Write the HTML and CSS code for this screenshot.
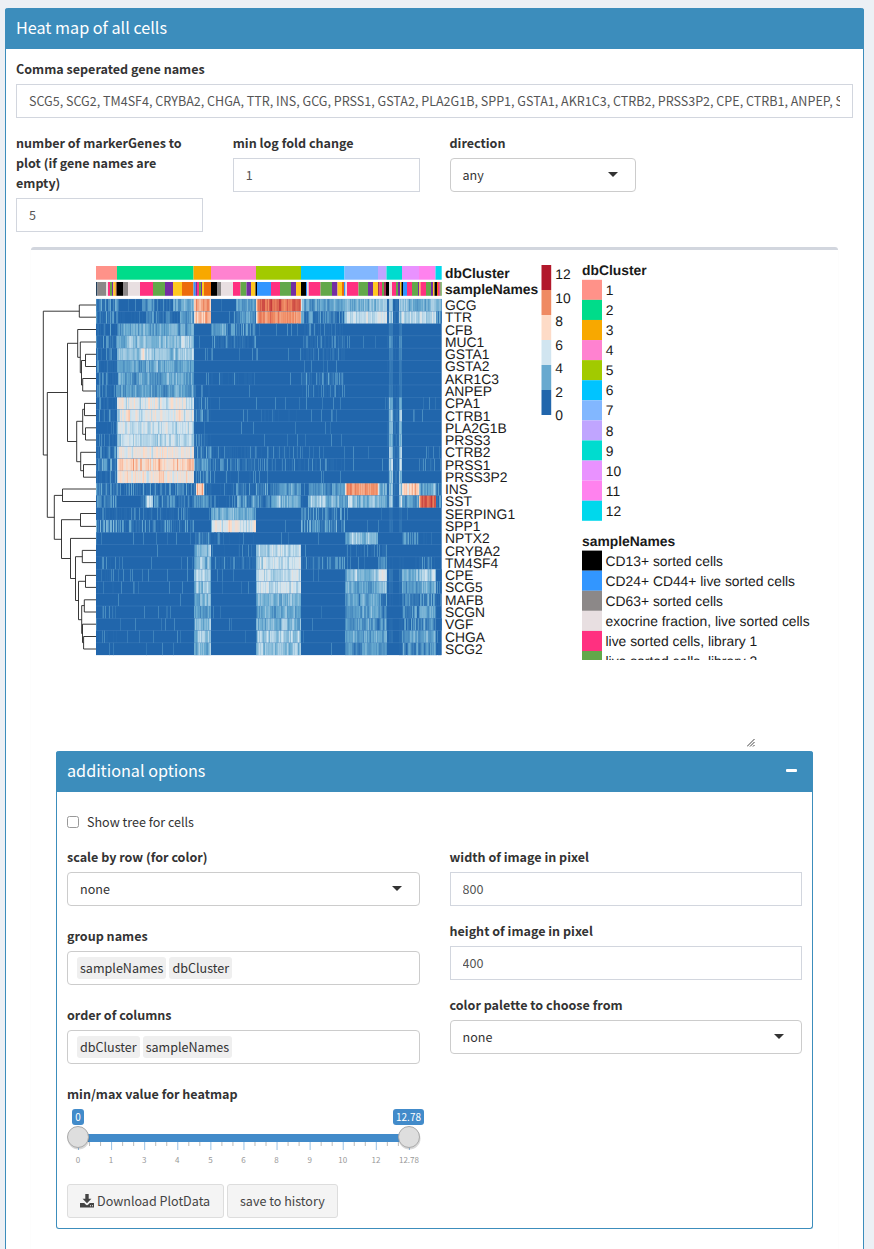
FILE: index.html
```html
<!DOCTYPE html>
<html lang="en">
<head>
<meta charset="utf-8">
<title>Heat map of all cells</title>
<link rel="stylesheet" href="styles.css">
</head>
<body>
<main class="box">
  <header class="box-header">Heat map of all cells</header>
  <div class="box-body">
    <div class="field">
      <label class="label">Comma seperated gene names</label>
      <input class="control" value="SCG5, SCG2, TM4SF4, CRYBA2, CHGA, TTR, INS, GCG, PRSS1, GSTA2, PLA2G1B, SPP1, GSTA1, AKR1C3, CTRB2, PRSS3P2, CPE, CTRB1, ANPEP, SERPING1">
    </div>
    <div class="row four">
      <div class="field"><label class="label">number of markerGenes to plot (if gene names are empty)</label><input class="control" value="5"></div>
      <div class="field"><label class="label">min log fold change</label><input class="control" value="1"></div>
      <div class="field"><label class="label">direction</label><div class="select"><span>any</span><i class="caret"></i></div></div>
    </div>
    <section class="plot-box">
      <div class="plot-area">
        <svg class="plot" id="plot" viewBox="31 250 807 410" width="807" height="410"></svg>
        <svg class="grip" width="8" height="8" viewBox="0 0 8 8"><path d="M0 7.5L7.5 0M3 7.5L7.5 3M6 7.5L7.5 6" /></svg>
      </div>
      <div class="options">
        <header class="box-header options-header"><span>additional options</span><i class="minus"></i></header>
        <div class="box-body">
          <label class="check"><i class="check-box"></i>Show tree for cells</label>
          <div class="row two">
            <div>
              <div class="field wide"><label class="label">scale by row (for color)</label><div class="select"><span>none</span><i class="caret"></i></div></div>
              <div class="field wide"><label class="label">group names</label><div class="select tags"><span class="tag">sampleNames</span><span class="tag">dbCluster</span></div></div>
              <div class="field wide"><label class="label">order of columns</label><div class="select tags"><span class="tag">dbCluster</span><span class="tag">sampleNames</span></div></div>
              <label class="label flush">min/max value for heatmap</label>
              <svg class="slider" id="slider" viewBox="67 1104 360 65" width="360" height="65"></svg>
            </div>
            <div>
              <div class="field"><label class="label">width of image in pixel</label><input class="control" value="800"></div>
              <div class="field"><label class="label">height of image in pixel</label><input class="control" value="400"></div>
              <div class="field"><label class="label">color palette to choose from</label><div class="select"><span>none</span><i class="caret"></i></div></div>
            </div>
          </div>
          <div class="buttons">
            <button class="btn"><svg class="icon" width="14" height="14" viewBox="0 0 14 14"><path d="M5.3 0h3.4v4.7h2.7L7 9.2 2.6 4.7h2.7z"/><path d="M0 9h4.2l1.5 1.5a1.8 1.8 0 0 0 2.6 0L9.8 9H14v4.6H0zM10 11.3v1h1v-1zm2 0v1h1v-1z" fill-rule="evenodd"/></svg>Download PlotData</button>
            <button class="btn">save to history</button>
          </div>
        </div>
      </div>
    </section>
  </div>
</main>
<script src="plot.js"></script>
</body>
</html>
```

FILE: styles.css
```css
* { box-sizing: border-box; }
body { margin: 0; height: 1249px; overflow: hidden; padding: 8px 10px 0 5px; background: #ecf0f5; color: #333; font: 12.56px/20px "Noto Sans CJK SC", "Open Sans", sans-serif; }
.box { height: 1300px; background: #fff; border: 1px solid #3c8dbc; border-top: 0; border-radius: 3px; }
.box-header { height: 41px; padding: 9px 10px 11px 11px; margin: 0 -1px; border-radius: 3px 3px 0 0; background: #3c8dbc; color: #fff; font-size: 16.18px; line-height: 20px; }
.box-body { padding: 10px; }
.field { margin-bottom: 15px; }
.field.wide { margin-bottom: 20px; }
.label { display: block; margin-bottom: 5px; font-weight: 700; }
.label.flush { margin: 0; }
.control { display: block; width: 100%; height: 34px; padding: 5px 12px 7px; border: 1px solid #d2d6de; border-radius: 0; background: #fff; color: #555; font: inherit; outline: 0; }
.row { display: grid; column-gap: 30px; }
.four { grid-template-columns: repeat(4, minmax(0, 1fr)); }
.two { grid-template-columns: repeat(2, minmax(0, 1fr)); }
.select { display: flex; align-items: center; justify-content: space-between; height: 34px; padding: 0 17px 0 12px; border: 1px solid #ccc; border-radius: 4px; }
.caret { width: 0; height: 0; margin-top: -2px; border: 5px solid transparent; border-top-color: #333; border-bottom: 0; }
.tags { justify-content: flex-start; gap: 3px; padding-left: 9px; }
.tag { padding: 1px 3px; border-radius: 3px; background: #efefef; }
.plot-box { margin: 0 15px; height: 1040px; border-top: 3px solid #d2d6de; border-radius: 3px; box-shadow: 0 1px 1px rgba(0, 0, 0, .1); }
.plot-area { position: relative; height: 501px; }
.plot { display: block; font-family: "Liberation Sans", Arial, sans-serif; font-size: 13.86px; fill: #1a1a1a; text-rendering: geometricPrecision; }
.bold { font-weight: 700; }
.grip { position: absolute; left: 716px; top: 489px; stroke: #444; fill: none; stroke-width: 1; }
.options { margin: 0 25px; height: 478px; border: 1px solid #3c8dbc; border-top: 0; border-radius: 3px; }
.options-header { display: flex; justify-content: space-between; }
.minus { width: 11px; height: 3px; margin: 9px 6px 0 0; border-radius: 1px; background: #fff; }
.check { display: flex; align-items: center; gap: 8px; margin: 10px 0 15px; }
.check-box { width: 12px; height: 12px; border: 1px solid #999; border-radius: 2.5px; }
.slider { display: block; overflow: visible; font-size: 8.06px; }
.slider .grid-text { fill: #999; }
.slider .badge { fill: #fff; font-size: 10px; }
.buttons { display: flex; gap: 3px; margin-top: 15px; }
.btn { display: flex; align-items: center; justify-content: flex-start; gap: 3px; width: 111px; height: 34px; padding: 0 0 0 12px; border: 1px solid #ddd; border-radius: 3px; background: #f4f4f4; color: #444; font: inherit; white-space: nowrap; }
.btn:first-child { width: 157px; }
.icon { fill: #444; }
```

FILE: plot.js
```js
const genes = "GCG TTR CFB MUC1 GSTA1 GSTA2 AKR1C3 ANPEP CPA1 CTRB1 PLA2G1B PRSS3 CTRB2 PRSS1 PRSS3P2 INS SST SERPING1 SPP1 NPTX2 CRYBA2 TM4SF4 CPE SCG5 MAFB SCGN VGF CHGA SCG2".split(" ");
const edges = [96, 117, 193.5, 211, 256, 301, 344.5, 378, 386.5, 402, 419, 435.5, 441.7];
const clusterColors = ["#ff9289", "#00dc8a", "#f8a800", "#ff82d0", "#a2ca00", "#00c4ff", "#82b7ff", "#c0a5ff", "#00dccf", "#e992ff", "#ff82ee", "#00d8ec"];

// Mean level per gene and cluster, on the six-step colour scale below.
const levels = [
  [.5,.5,3.6,.4,4.3,.9,1.1,1.5,1.1,1.1,1.2,.8],
  [.4,.4,3.4,.3,3.9,.5,1.9,1.9,1,1.5,1.7,.6],
  [.3,.9,0,.6,.04,.15,0,0,.2,0,0,0],
  [.3,1.3,.06,.3,0,.25,.04,0,.5,0,0,0],
  [.2,1.5,.05,.05,.06,.2,0,0,.3,0,0,0],
  [.15,.95,0,0,0,.04,0,0,.2,0,0,0],
  [.2,.95,.06,.1,.04,.35,.04,0,.2,0,.03,0],
  [.2,.8,.1,.04,.04,.15,0,0,.2,.04,0,0],
  [.25,2.35,.25,.05,.03,.04,0,.05,.9,0,.08,0],
  [.2,2.3,.4,.05,.1,.05,.04,.03,1.1,.05,.05,0],
  [.1,1.95,.08,.05,.03,.04,0,0,.8,0,0,0],
  [.2,1.8,.2,.06,.05,.04,.03,0,.9,0,0,0],
  [.4,2.5,.5,.15,.1,.08,.04,.04,1.1,.05,.06,.05],
  [.5,3.1,.7,.3,.15,.15,.05,.1,1.2,.05,.2,.05],
  [.3,2.7,.4,.1,.04,.05,0,0,1,.03,0,0],
  [.4,.35,1,.3,.8,.75,3.8,.9,1,3.3,.9,.3],
  [.4,.45,.7,.6,.9,1,1.1,.9,1.2,.8,4.6,.5],
  [.15,.15,.03,1.1,.02,.4,.03,.04,.1,.02,0,.04],
  [.6,.35,.02,2.25,.02,.6,.04,.03,.15,.05,.02,0],
  [.05,.05,.4,.1,.03,.02,1.4,.02,0,.5,.1,0],
  [.04,.04,1.4,.1,1.8,.02,.12,.3,0,.03,0,0],
  [.1,.08,1.3,.2,1.9,.3,.05,.9,.03,.1,.25,0],
  [.1,.05,1.8,.05,1.9,.04,1.4,1.9,.2,1,1.7,.1],
  [.1,.08,1.6,.03,1.85,.02,.9,1.3,.1,.8,1,.2],
  [.05,.03,1.1,.02,1.2,.02,.75,.5,.03,.5,.6,.2],
  [.1,.05,1,.01,.9,.01,.9,.8,.02,.5,.8,.1],
  [.05,.03,1.2,.01,1.2,.02,.75,.6,.05,.4,.7,.1],
  [.1,.03,1.6,.02,1.5,.02,.9,.8,.1,.75,.9,.1],
  [.05,.05,1.1,.01,1.3,.01,.75,.8,.03,.5,.7,.1]
];
// Gene row, start x, end x, level: stretches that differ from their cluster.
const patches = [
  [0,119,142,.08],[0,142,152,.7],[0,152,173,.4],[0,173,193.5,1.1],[1,119,146,.1],[1,146,152,.8],[1,180,193.5,.9],
  [0,211,236,.06],[0,236,256,.9],[1,211,233,.04],[1,236,256,.7],[3,181,187,2],[4,140,147,2.3],
  [15,193.5,196,.4],[15,196,204,3.3],[15,204,211,.3],[15,256,271,.5],[15,301,308,.1],[16,146,153,1.6],[16,117,140,.04],
  [16,256,271,.4],[16,271,285,1.3],[16,309,325,1.6],[16,348,352,2],[16,301,308,.15],[17,342,344,.03],[15,211,234,.1],[16,211,234,.1],
  [2,211,226,.8],[2,226,236,.4]
];
const scale = [[33,102,172],[103,169,207],[209,229,240],[253,219,199],[239,138,98],[178,24,43]];
let seed = 71;
const rnd = () => (seed = (seed * 16807) % 2147483647) / 2147483647;
const color = v => {
  v = Math.max(0, Math.min(4.95, v));
  const i = Math.floor(v), t = v - i;
  return "rgb(" + scale[i].map((c, k) => Math.round(c + (scale[i + 1][k] - c) * t)) + ")";
};
const rect = (x, y, w, h, f) => `<rect x="${x}" y="${y}" width="${w}" height="${h}" fill="${f}"/>`;
const text = (x, y, s, extra = "") => `<text x="${x}" y="${y}" ${extra}>${s}</text>`;

let out = "";
clusterColors.forEach((c, i) => out += rect(edges[i], 266, edges[i + 1] - edges[i], 13.7, c));

const sample = { k: "#000", b: "#3296ff", g: "#8c8888", w: "#e8dfe1", p: "#ff3080", n: "#62a84a", v: "#742da4", y: "#ffc820", o: "#ec6b0c", d: "#24405a", r: "#a83058" };
const strips = "96d 97.5g 106w 108p 110n 112v 113.3y 115.5o 116.5k 123g 128w 140p 153n 165v 173y 182o 193.5b 195.5v 197p 199n 201v 202y 204o 211k 217g 221w 233p 240.5n 246.5v 251y 255.5k 257b 271p 280n 291v 296y 301k 306b 307w 308.7p 320.5n 332v 337.5y 342o 344b 345.5w 347p 358.5n 368v 373y 378r 379.7p 382n 384r 386k 389w 392p 396n 398v 400y 401.5k 403b 407p 412n 418v 419.3y 420.5p 426n 431v 433y 434.5k 437o 438p 439.5r 440.5n 441.7".split(" ");
strips.slice(0, -1).forEach((s, i) => {
  const x = parseFloat(s);
  out += rect(x, 282, parseFloat(strips[i + 1]) - x, 13.8, sample[s.slice(-1)]);
});

const top0 = 299, rowH = 12.28;
out += rect(96, top0, 345.7, rowH * 29, "#2166ac");
genes.forEach((g, r) => {
  const y = top0 + r * rowH;
  let c = 0, previous = 0;
  for (let x = 96; x < 441.5; x += 1) {
    while (x >= edges[c + 1]) c++;
    let m = levels[r][c];
    patches.forEach(p => { if (p[0] === r && x >= p[1] && x < p[2]) m = p[3]; });
    let v;
    if (c === 8) {
      const peak = (x >= 389 && x < 393) || (x >= 399 && x < 402);
      v = peak ? m * (1 + rnd() * .8) : m * .25 * rnd();
    } else if (m < .65) {
      v = rnd() < m * 1.1 ? .2 + rnd() * (.35 + m * 1.3) : rnd() * m * .5;
      previous = m;
    } else {
      const spread = m > 3.6 ? .45 : m > 2.1 ? .8 : .6;
      v = m + (rnd() + rnd() - 1) * spread + (previous - m) * .35;
      previous = v;
    }
    if (v > .04) out += rect(x, y, Math.min(1, 441.7 - x), rowH, color(v));
  }
  out += rect(96, y - .25, 345.7, .5, "rgba(110,160,210,.4)");
  out += text(445, y + 11, g);
});

// Row tree: [node x, top y, top child x, bottom y, bottom child x].
const tree = [
  [43.3,311.2,79.3,455,47.3],[79.3,305,96,317.2,96],[47.3,392.5,67.5,517.3,54.3],
  [67.5,343.3,77.7,441.5,76.7],[77.7,329.5,96,357.3,80.3],[80.3,342,96,372.7,81.5],
  [81.5,360.5,85.5,385,82.7],[85.5,354.3,96,366.5,96],[82.7,378.5,96,391,96],
  [76.7,421.3,82.7,461.7,80.7],[82.7,409.3,84.5,434.3,85.5],[84.5,403.4,96,415.6,96],[85.5,427.8,96,440,96],
  [80.7,452.3,96,470.7,83.5],[83.5,464.6,96,477.2,96],[54.3,495.4,62.5,539.3,61.5],[62.5,489,96,501.5,96],
  [61.5,519.7,80.5,558.5,70.5],[80.5,513.5,96,526.4,96],[70.5,538.4,96,578.5,75.5],
  [75.5,556.7,82.3,600.5,78.5],[82.3,550.4,96,562.6,96],[78.5,581.3,85.5,619.7,81.7],[85.5,575.4,96,587.4,96],
  [81.7,605.6,84.3,633.5,82.5],[84.3,599.8,96,612,96],[82.5,624.2,96,642.6,83.6],[83.6,636.5,96,649,96]
];
out += `<path fill="none" stroke="#222" stroke-width=".9" d="${tree.map(n => `M${n[2]} ${n[1]}H${n[0]}V${n[3]}H${n[4]}`).join("")}"/>`;

out += text(445, 278, "dbCluster", 'class="bold"') + text(445, 294, "sampleNames", 'class="bold"');
["#b2182b", "#ef8a62", "#fddbc7", "#d1e5f0", "#67a9cf", "#2166ac"].forEach((c, i) => out += rect(541.5, 265 + i * 25, 9.7, 25, c));
[12, 10, 8, 6, 4, 2, 0].forEach((n, i) => out += text(555.3, 279.3 + i * 23.5, n));
out += text(582, 275, "dbCluster", 'class="bold"') + text(582, 546, "sampleNames", 'class="bold"');
clusterColors.forEach((c, i) => out += rect(582, 279.8 + i * 20.08, 20, 20.1, c) + text(605.8, 295 + i * 20.08, i + 1));
[["CD13+ sorted cells", "k"], ["CD24+ CD44+ live sorted cells", "b"], ["CD63+ sorted cells", "g"], ["exocrine fraction, live sorted cells", "w"], ["live sorted cells, library 1", "p"], ["live sorted cells, library 2", "n"]].forEach((s, i) =>
  out += rect(582, 550.6 + i * 20.08, 20, 20.1, sample[s[1]]) + text(605.5, 565.8 + i * 20.08, s[0]));
document.getElementById("plot").innerHTML = out;

let s = rect(78, 1134, 331, 8, "#428bca");
for (let i = 0; i <= 30; i++) {
  const x = 78 + i * 11.03;
  s += rect(x, 1142, 1, i % 3 ? 4 : 8, i % 3 ? "#bbb" : "#99c1e5");
}
["0", "1", "3", "4", "5", "6", "8", "9", "10", "12", "12.78"].forEach((n, i) => s += text(78 + i * 33.1, 1163, n, 'class="grid-text" text-anchor="middle"'));
[78, 409].forEach(x => s += `<circle cx="${x + .5}" cy="1138.5" r="11" fill="rgba(0,0,0,.15)"/><circle cx="${x}" cy="1137" r="10.5" fill="#dedede" stroke="#aaa"/>`);
s += '<rect x="72" y="1109" width="12" height="16" rx="3" fill="#428bca"/><rect x="393" y="1109" width="31" height="16" rx="3" fill="#428bca"/>';
s += text(78, 1121, "0", 'class="badge" text-anchor="middle"') + text(408.5, 1121, "12.78", 'class="badge" text-anchor="middle"');
document.getElementById("slider").innerHTML = s;
```
